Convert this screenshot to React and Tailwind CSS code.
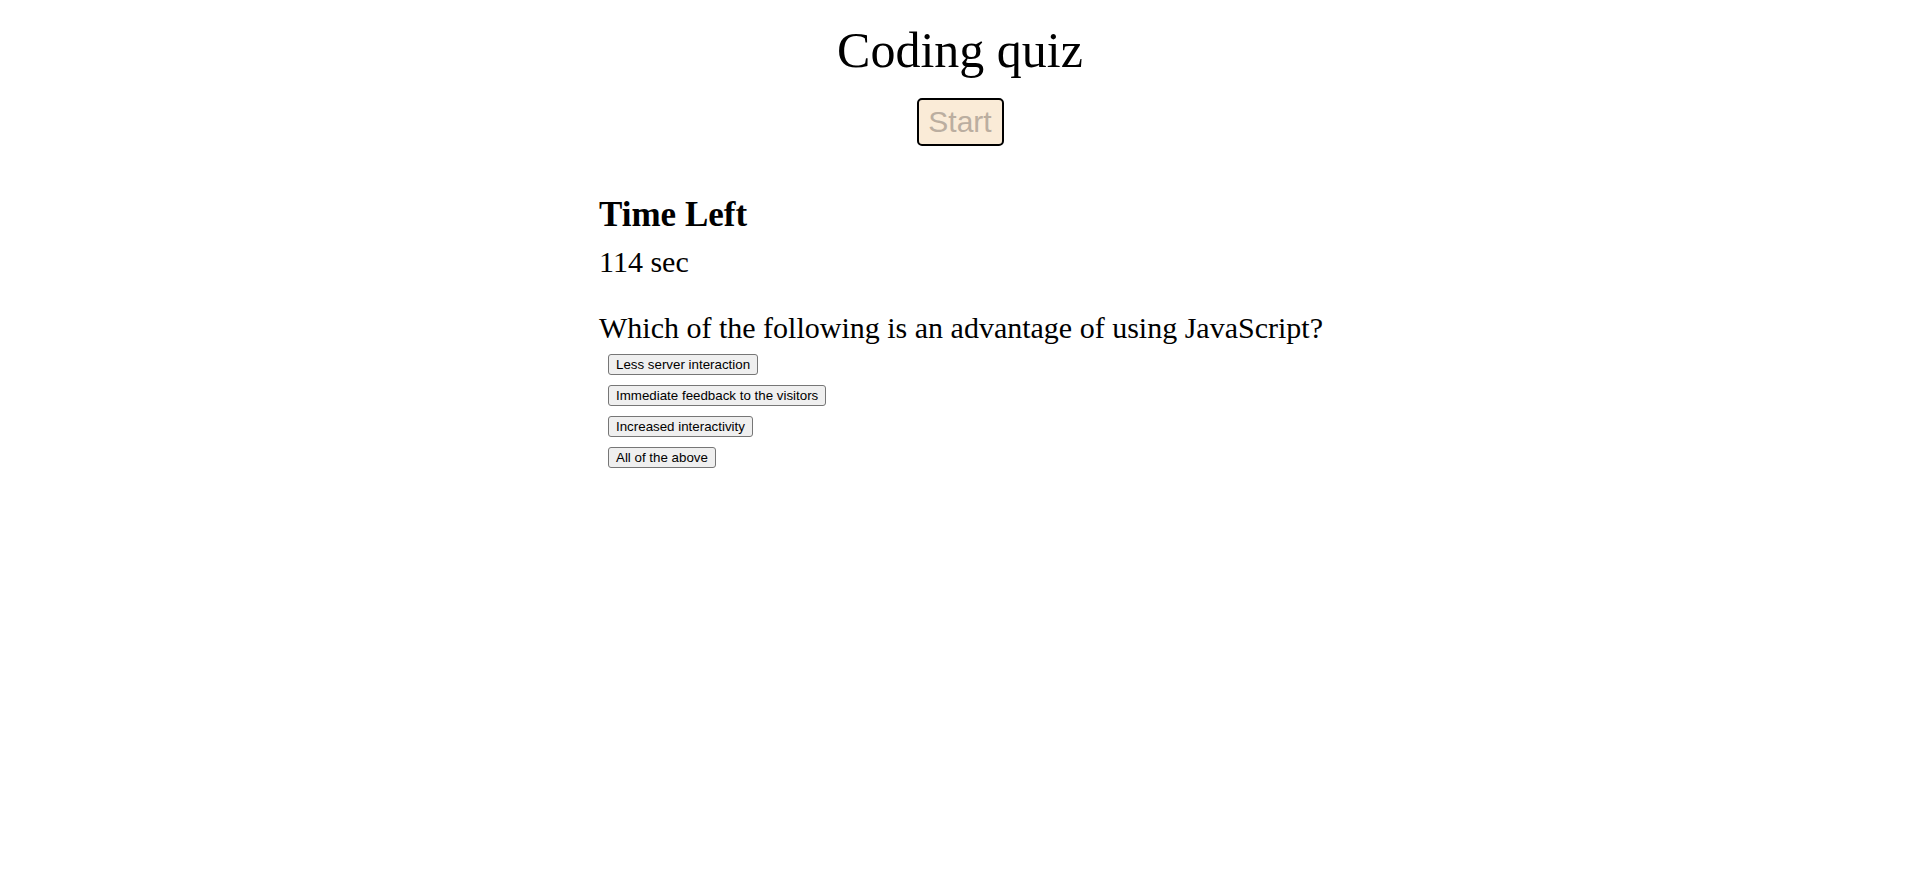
import React from 'react';

const options = [
    'Less server interaction',
    'Immediate feedback to the visitors',
    'Increased interactivity',
    'All of the above',
];

const App = () => {
    return (
        <div className="min-h-[872px] bg-white text-black font-['Liberation_Serif',serif]">
            {/* Header */}
            <h1 className="pt-[21px] text-center text-[50px] leading-[58px] font-normal">Coding quiz</h1>
            <div className="mt-[19px] flex justify-center">
                <button
                    disabled
                    className="w-[87px] h-[48px] flex items-center justify-center border-2 border-black rounded-[5px] bg-[#faebd7] text-[#bbaea0] text-[30px] leading-none font-['Liberation_Sans',Arial,sans-serif]"
                >
                    Start
                </button>
            </div>

            {/* Quiz */}
            <div className="w-[722px] mx-auto">
                <h2 className="mt-[49px] text-[35px] leading-[40px] font-bold">Time Left</h2>
                <p className="mt-[10px] text-[30px] leading-[34px]">114 sec</p>
                <p className="mt-[32px] text-[30px] leading-[34px] whitespace-nowrap">
                    Which of the following is an advantage of using JavaScript?
                </p>
                <div className="mt-[9px] ml-[9px] flex flex-col items-start gap-[10px]">
                    {options.map((opt, i) => (
                        <button
                            key={i}
                            className="h-[21px] px-[7px] border border-[#767676] rounded-[3px] bg-[#efefef] text-black text-[13.33px] leading-[15px] font-['Liberation_Sans',Arial,sans-serif] whitespace-nowrap"
                        >
                            {opt}
                        </button>
                    ))}
                </div>
            </div>
        </div>
    );
};

export default App;
